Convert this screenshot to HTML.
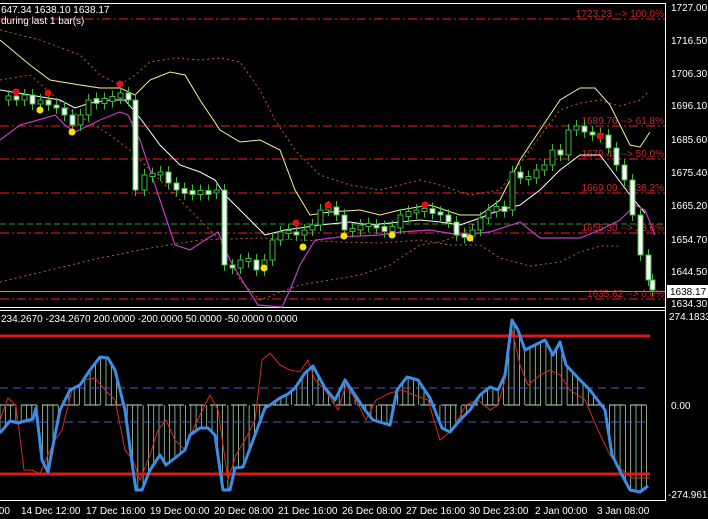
<!DOCTYPE html>
<html><head><meta charset="utf-8"><style>
html,body{margin:0;padding:0;background:#000;width:708px;height:519px;overflow:hidden}
svg{display:block}
text{font-family:"Liberation Sans",sans-serif;font-size:10px}
</style></head><body>
<svg id="s" width="708" height="519" viewBox="0 0 708 519" xmlns="http://www.w3.org/2000/svg">
<rect width="708" height="519" fill="#000"/>
<line x1="0" y1="3.5" x2="666" y2="3.5" stroke="#fff"/>
<line x1="0" y1="307.5" x2="666" y2="307.5" stroke="#fff"/>
<line x1="0" y1="310.5" x2="666" y2="310.5" stroke="#fff"/>
<line x1="0" y1="500.5" x2="666" y2="500.5" stroke="#fff"/>
<line x1="665.5" y1="3" x2="665.5" y2="501" stroke="#fff"/>
<g stroke="#c0181c" stroke-width="1.2" stroke-dasharray="9,3,2,3" fill="none">
<line x1="0" y1="19" x2="665" y2="19"/>
<line x1="0" y1="126" x2="665" y2="126"/>
<line x1="0" y1="159" x2="665" y2="159"/>
<line x1="0" y1="193" x2="665" y2="193"/>
<line x1="0" y1="233" x2="665" y2="233"/>
<line x1="0" y1="299" x2="665" y2="299"/>
</g>
<line x1="0" y1="224" x2="665" y2="224" stroke="#2f9a2f" stroke-dasharray="6,3"/>
<line x1="0" y1="291.5" x2="665" y2="291.5" stroke="#8a9aa0"/>
<g font-size="9.5" fill="#c8242a" text-anchor="end">
<text x="664" y="17">1723.23 --&gt; 100.0%</text>
<text x="664" y="124">1689.76 --&gt; 61.8%</text>
<text x="664" y="157">1679.43 --&gt; 50.0%</text>
<text x="664" y="191">1669.09 --&gt; 38.2%</text>
<text x="664" y="231">1656.30 --&gt; 23.6%</text>
<text x="664" y="297">1635.62 --&gt; 0.0%</text>
</g>
<g fill="none" stroke="#c05838" stroke-width="1" stroke-dasharray="2,3">
<polyline points="0,30 40,40 80,55 100,75 120,85 135,75 150,62 175,58 200,60 220,58 240,62 260,90 275,120 295,150 320,175 350,185 380,190 420,180 440,185 470,195 500,190 530,150 560,110 580,103 600,100 620,106 640,100 648,92"/>
<polyline points="0,80 30,75 70,110 110,135 130,150 160,180 190,210 220,240 240,280 260,300 280,292 300,285 330,280 360,275 390,265 420,245 440,242 460,235 480,220"/>
<polyline points="0,282 50,270 100,258 150,248 200,240 260,238 300,240 340,242 380,243 420,240 450,245 480,245 500,258 530,266 560,262 580,252 600,246 620,246"/>
</g>
<polyline fill="none" stroke="#f2f29a" points="0,40 30,65 50,80 80,85 100,88 120,88 135,95 150,80 170,72 185,75 200,100 220,130 240,142 260,140 280,150 295,190 310,215 330,212 360,210 380,215 400,210 430,205 460,215 480,215 500,200 520,160 540,130 560,100 580,88 595,88 610,105 630,145 640,147 650,132"/>
<polyline fill="none" stroke="#fff" points="0,90 30,95 60,100 75,108 90,103 110,100 125,100 140,118 160,145 180,165 200,172 215,180 225,195 250,220 265,235 285,230 300,228 320,225 350,222 370,225 400,222 420,220 440,222 460,225 480,218 500,210 520,205 540,190 560,170 580,155 600,155 615,175 630,195 645,213"/>
<polyline fill="none" stroke="#c03cc8" stroke-width="1.2" points="0,140 20,125 45,118 55,115 65,125 75,132 100,120 120,112 128,115 140,140 160,200 175,245 190,250 205,240 218,232 230,260 245,285 258,305 282,307 290,290 300,265 315,240 340,237 380,235 400,232 430,230 460,235 490,232 520,222 540,238 560,238 580,238 600,230 620,220 635,205 645,210 655,235"/>
<g id="candles"></g>
<g id="dots"></g>
<text x="1" y="13" fill="#fff">647.34 1638.10 1638.17</text>
<text x="1" y="24" fill="#fff">during last 1 bar(s)</text>
<g fill="#fff">
<text x="671" y="11">1727.00</text>
<text x="671" y="44">1716.50</text>
<text x="671" y="77">1706.30</text>
<text x="671" y="109">1696.10</text>
<text x="671" y="143">1685.60</text>
<text x="671" y="176">1675.40</text>
<text x="671" y="209">1665.20</text>
<text x="671" y="243">1654.70</text>
<text x="671" y="275">1644.50</text>
<text x="671" y="307">1634.30</text>
<text x="669" y="320">274.1833</text>
<text x="671" y="409">0.00</text>
<text x="668" y="498">-274.961</text>
</g>
<rect x="667" y="285" width="41" height="13" fill="#fff"/>
<text x="670" y="295" fill="#000">1638.17</text>
<text x="1" y="322" fill="#fff">234.2670 -234.2670 200.0000 -200.0000 50.0000 -50.0000 0.0000</text>
<g id="hist"></g>
<line x1="0" y1="388" x2="650" y2="388" stroke="#4a5ad0" stroke-dasharray="8,5"/>
<line x1="0" y1="422" x2="650" y2="422" stroke="#4a5ad0" stroke-dasharray="8,5"/>
<line x1="0" y1="336" x2="650" y2="336" stroke="#e01818" stroke-width="3"/>
<line x1="0" y1="474" x2="650" y2="474" stroke="#e01818" stroke-width="3"/>
<polyline fill="none" stroke="#d42a20" stroke-width="1" points="0,420 8,398 16,406 24,470 32,470 40,474 48,455 55,440 62,430 72,390 85,380 95,378 105,390 115,400 125,450 133,460 140,480 150,455 158,430 166,420 175,440 185,450 195,425 210,395 218,410 228,480 236,455 245,440 255,420 262,360 270,353 280,365 290,370 300,372 308,360 315,380 325,390 338,410 346,385 356,400 366,420 376,400 390,393 402,390 414,395 428,400 440,440 452,430 466,405 478,400 490,410 498,405 505,380 512,330 520,365 528,385 540,375 550,370 560,375 570,390 585,400 598,430 610,455 620,468 632,478 642,478 650,478"/>
<polyline id="blue" fill="none" stroke="#3a8ee8" stroke-width="3" stroke-linejoin="round" points="0,433 10,421 18,423 25,421 33,419 36,408 42,460 48,472 55,435 60,410 70,390 80,385 90,370 100,357 108,358 115,370 125,410 133,470 136,490 142,490 150,470 160,455 166,465 175,458 185,450 190,435 200,428 208,428 215,435 220,470 223,490 230,490 235,468 243,467 255,435 265,408 270,405 280,398 288,394 295,388 305,373 313,366 325,388 335,400 345,380 355,395 365,410 373,420 383,423 390,425 397,390 407,377 418,380 430,398 442,428 450,432 460,420 470,410 480,395 490,387 498,390 505,375 512,320 518,330 525,350 535,345 545,340 553,355 560,342 566,365 580,380 590,390 605,410 612,455 622,475 630,490 640,492 648,486"/>
<g fill="#fff">
<text x="-4" y="514">:00</text>
<text x="21" y="514">14 Dec 12:00</text>
<text x="86" y="514">17 Dec 16:00</text>
<text x="150" y="514">19 Dec 00:00</text>
<text x="214" y="514">20 Dec 08:00</text>
<text x="278" y="514">21 Dec 16:00</text>
<text x="342" y="514">26 Dec 08:00</text>
<text x="406" y="514">27 Dec 16:00</text>
<text x="469" y="514">30 Dec 23:00</text>
<text x="535" y="514">2 Jan 00:00</text>
<text x="597" y="514">3 Jan 08:00</text>
</g>
</svg>
<script>
(function(){
var NS="http://www.w3.org/2000/svg";
function el(p,t,a){var e=document.createElementNS(NS,t);for(var k in a)e.setAttribute(k,a[k]);p.appendChild(e);return e;}
var closes=[[0,100],[8,96],[16,100],[24,95],[32,104],[40,100],[48,105],[56,108],[64,115],[72,125],[80,115],[88,100],[96,102],[104,100],[112,98],[120,93],[128,100],[135,190],[144,175],[152,175],[160,172],[168,183],[176,190],[184,192],[192,193],[200,192],[208,193],[216,190],[224,265],[232,268],[240,260],[248,260],[256,270],[264,260],[272,240],[280,232],[288,232],[296,235],[304,230],[312,225],[320,210],[328,207],[336,215],[344,230],[352,230],[360,225],[368,225],[376,228],[384,230],[392,228],[400,215],[408,213],[416,210],[424,210],[432,212],[440,215],[448,222],[456,235],[464,236],[472,230],[480,218],[488,210],[496,208],[504,210],[512,172],[520,178],[528,178],[536,170],[544,165],[552,150],[560,155],[568,130],[576,126],[584,132],[592,135],[600,135],[608,148],[616,165],[624,180],[632,215],[640,255],[648,280],[652,290]];
var g=document.getElementById("candles");
for(var i=1;i<closes.length;i++){var cx=closes[i][0],o=closes[i-1][1],c=closes[i][1];
var t1=Math.min(o,c),b1=Math.max(o,c);if(b1-t1<3){t1-=1.5;b1+=1.5;}
el(g,"line",{x1:cx+0.5,y1:t1-6,x2:cx+0.5,y2:b1+6,stroke:"#3cb83c"});
el(g,"rect",{x:cx-2,y:t1,width:5,height:b1-t1,fill:(c>o?"#fff":"#000"),stroke:"#3cb83c"});}
var d=document.getElementById("dots");
[[16,92],[48,93],[120,84],[296,223],[328,205],[425,205],[600,136]].forEach(function(p){el(d,"circle",{cx:p[0],cy:p[1],r:3.5,fill:"#e01010"});});
[[40,110],[72,132],[264,268],[303,247],[344,236],[392,235],[470,238]].forEach(function(p){el(d,"circle",{cx:p[0],cy:p[1],r:3.5,fill:"#f4e400"});});
var pts=document.getElementById("blue").getAttribute("points").trim().split(/\s+/).map(function(s){return s.split(",").map(Number);});
function yAt(x){for(var i=1;i<pts.length;i++){if(pts[i][0]>=x){var a=pts[i-1],b=pts[i];return a[1]+(b[1]-a[1])*(x-a[0])/(b[0]-a[0]);}}return pts[pts.length-1][1];}
var h=document.getElementById("hist");
for(var hx=0;hx<=648;hx+=5.3){el(h,"line",{x1:hx,y1:405,x2:hx,y2:yAt(hx),stroke:"#a8d0a8","stroke-width":0.8});}
for(var hx2=0;hx2<648;hx2+=21){el(h,"line",{x1:hx2,y1:405,x2:hx2+16,y2:405,stroke:"#b8e0b8","stroke-width":1});}
})();
</script>
</body></html>
